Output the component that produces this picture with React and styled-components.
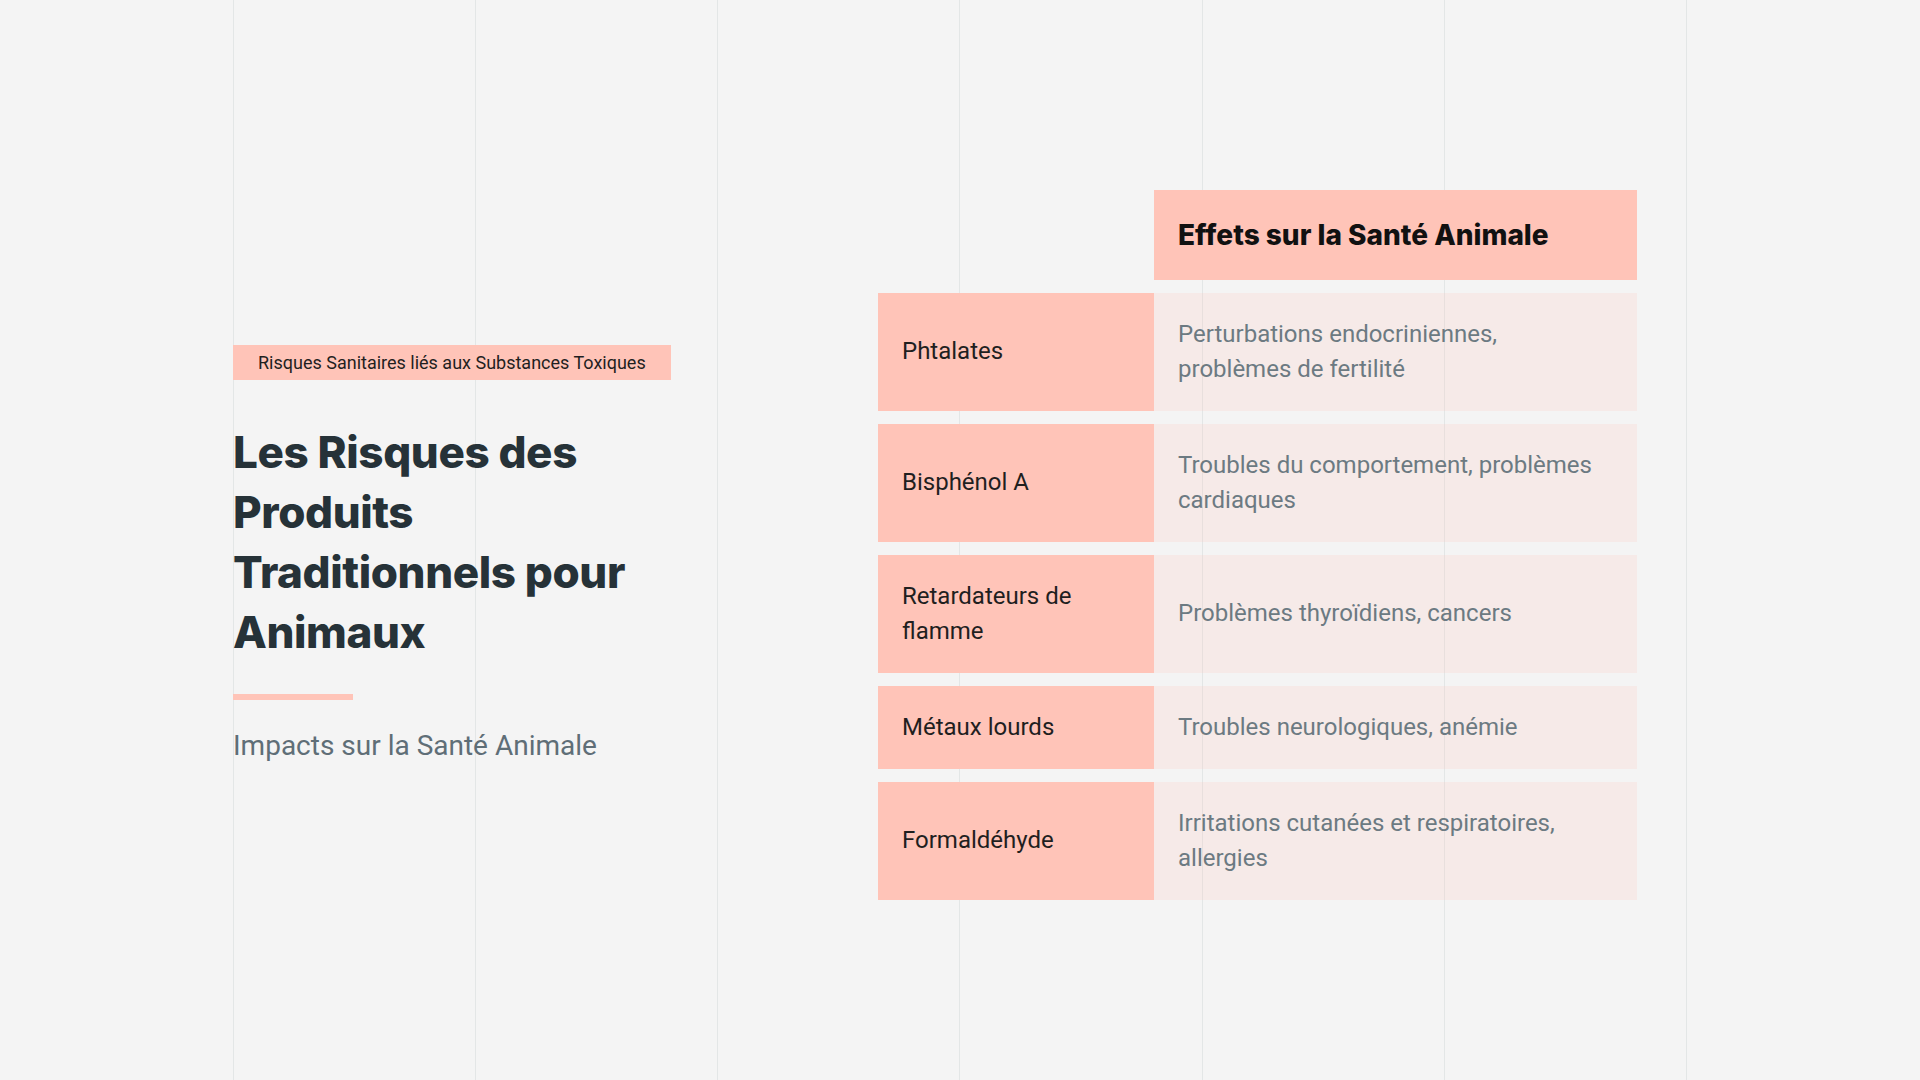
import React from "react";
import styled, { createGlobalStyle } from "styled-components";

const rows = [
  { name: "Phtalates", effect: "Perturbations endocriniennes, problèmes de fertilité" },
  { name: "Bisphénol A", effect: "Troubles du comportement, problèmes cardiaques" },
  { name: "Retardateurs de flamme", effect: "Problèmes thyroïdiens, cancers" },
  { name: "Métaux lourds", effect: "Troubles neurologiques, anémie" },
  { name: "Formaldéhyde", effect: "Irritations cutanées et respiratoires, allergies" },
];

function App() {
  return (
    <>
      <GlobalStyle />
      <Page>
        <GridLines>
          {Array.from({ length: 7 }).map((_, i) => (
            <Line key={i} />
          ))}
        </GridLines>
        <Content>
          <Intro>
            <Tag>Risques Sanitaires liés aux Substances Toxiques</Tag>
            <Title>Les Risques des Produits Traditionnels pour Animaux</Title>
            <Accent />
            <Subtitle>Impacts sur la Santé Animale</Subtitle>
          </Intro>
          <Table>
            <colgroup>
              <col style={{ width: 276 }} />
              <col style={{ width: 483 }} />
            </colgroup>
            <thead>
              <tr>
                <EmptyHead />
                <HeadCell>Effets sur la Santé Animale</HeadCell>
              </tr>
            </thead>
            <tbody>
              {rows.map((r) => (
                <tr key={r.name}>
                  <NameCell>{r.name}</NameCell>
                  <EffectCell>{r.effect}</EffectCell>
                </tr>
              ))}
            </tbody>
          </Table>
        </Content>
      </Page>
    </>
  );
}

export default App;

const GlobalStyle = createGlobalStyle`
  html, body {
    margin: 0;
    padding: 0;
    background: #f4f4f4;
    font-family: Roboto, "Liberation Sans", sans-serif;
  }
  * {
    box-sizing: border-box;
  }
`;

const Page = styled.div`
  position: relative;
  width: 100%;
  height: 100vh;
  padding: 9px 0 0 233px;
  display: flex;
  align-items: center;
  overflow: hidden;
`;

const GridLines = styled.div`
  position: absolute;
  inset: 0;
  padding: 0 233px;
  display: flex;
  justify-content: space-between;
  pointer-events: none;
  z-index: 0;
`;

const Line = styled.div`
  width: 1px;
  height: 100%;
  background: #e3e6e6;
`;

const Content = styled.div`
  position: relative;
  z-index: 1;
  display: flex;
  align-items: center;
  gap: 165px;
`;

const Intro = styled.div`
  width: 480px;
  margin-top: 20px;
  display: flex;
  flex-direction: column;
  align-items: flex-start;
`;

const Tag = styled.span`
  display: inline-block;
  background: #ffc4b8;
  color: #1f1f1f;
  font-size: 18px;
  line-height: 27px;
  padding: 4px 25px;
`;

const Title = styled.h1`
  margin: 42px 0 0;
  max-width: 440px;
  font-family: Inter, "Noto Sans", sans-serif;
  font-weight: 800;
  font-size: 44px;
  line-height: 60px;
  letter-spacing: -0.4px;
  color: #263238;
`;

const Accent = styled.div`
  width: 120px;
  height: 6px;
  margin-top: 32px;
  background: #ffc4b8;
`;

const Subtitle = styled.p`
  margin: 26px 0 0;
  font-size: 28px;
  line-height: 39px;
  color: #5f6e77;
`;

const Table = styled.table`
  width: 759px;
  table-layout: fixed;
  border-collapse: separate;
  border-spacing: 0 13px;
`;

const EmptyHead = styled.th`
  background: transparent;
`;

const HeadCell = styled.th`
  background: #ffc4b8;
  padding: 24px;
  text-align: left;
  font-family: Inter, "Noto Sans", sans-serif;
  font-weight: 800;
  font-size: 28px;
  line-height: 42px;
  color: #111;
`;

const NameCell = styled.td`
  background: #ffc4b8;
  padding: 24px;
  font-size: 24px;
  line-height: 35px;
  color: #1f1f1f;
`;

const EffectCell = styled.td`
  background: rgba(255, 196, 184, 0.2);
  padding: 24px 32px 24px 24px;
  font-size: 24px;
  line-height: 35px;
  color: #6c7a82;
`;
